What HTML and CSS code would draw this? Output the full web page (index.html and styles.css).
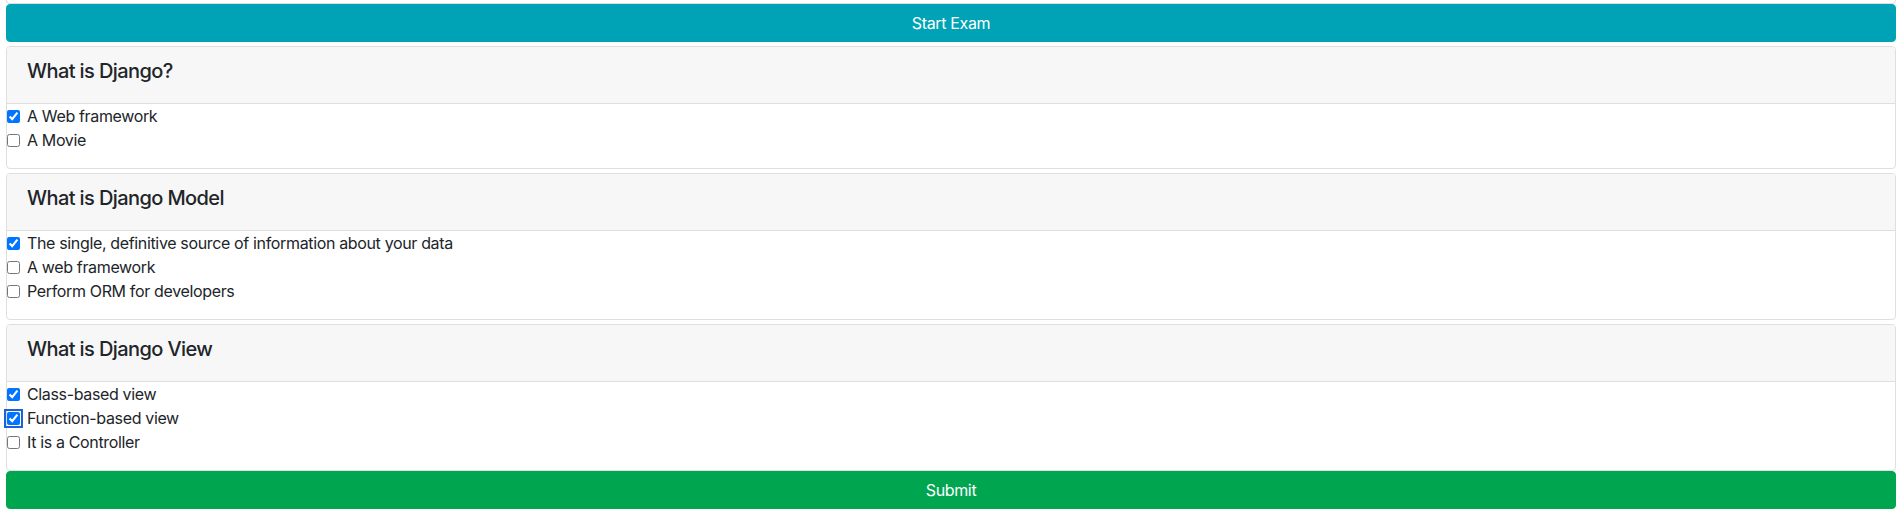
FILE: index.html
```html
<!DOCTYPE html>
<html>
<head>
<meta charset="utf-8">
<link rel="stylesheet" href="styles.css">
</head>
<body>
<div class="page">
  <div class="prev-card"></div>
  <button class="btn btn-info" type="button">Start Exam</button>

  <div class="card">
    <div class="card-header"><h5>What is Django?</h5></div>
    <div class="card-body">
      <label class="opt"><input type="checkbox" checked><span>A Web framework</span></label>
      <label class="opt"><input type="checkbox"><span>A Movie</span></label>
    </div>
  </div>

  <div class="card">
    <div class="card-header"><h5>What is Django Model</h5></div>
    <div class="card-body">
      <label class="opt"><input type="checkbox" checked><span>The single, definitive source of information about your data</span></label>
      <label class="opt"><input type="checkbox"><span>A web framework</span></label>
      <label class="opt"><input type="checkbox"><span>Perform ORM for developers</span></label>
    </div>
  </div>

  <div class="card">
    <div class="card-header"><h5>What is Django View</h5></div>
    <div class="card-body">
      <label class="opt"><input type="checkbox" checked><span>Class-based view</span></label>
      <label class="opt"><input type="checkbox" class="focused" checked><span>Function-based view</span></label>
      <label class="opt"><input type="checkbox"><span>It is a Controller</span></label>
    </div>
  </div>

  <button class="btn btn-success" type="submit">Submit</button>
</div>
</body>
</html>
```

FILE: styles.css
```css
html, body {
  margin: 0;
  padding: 0;
  background: #ffffff;
}

body {
  font-family: Inter, "Liberation Sans", Arial, sans-serif;
  font-size: 16px;
  line-height: 1.5;
  letter-spacing: -0.35px;
  color: #212529;
}

.page {
  display: flex;
  flex-direction: column;
  padding: 0 7px 0 6px;
}

.prev-card {
  height: 3px;
  border: 1px solid #dfdfdf;
  border-top: none;
  border-radius: 0 0 4px 4px;
}

.btn {
  display: block;
  width: 100%;
  height: 38px;
  border: 1px solid transparent;
  border-radius: 4px;
  font-family: inherit;
  font-size: 16px;
  line-height: 24px;
  letter-spacing: -0.35px;
  padding: 6px 12px;
  color: #ffffff;
  text-align: center;
  cursor: pointer;
}

.btn-info {
  background: #00a3b6;
  border-color: #00a3b6;
}

.btn-success {
  background: #00a64f;
  border-color: #00a64f;
}

.card {
  margin-top: 4px;
  border: 1px solid #dfdfdf;
  border-radius: 4px;
  background: #ffffff;
  display: flex;
  flex-direction: column;
}

.card-header {
  background: #f7f7f7;
  border-bottom: 1px solid #dfdfdf;
  padding: 12px 20px 12px 20px;
  border-radius: 3px 3px 0 0;
}

.card-header h5 {
  margin: 0 0 8px 0;
  font-size: 20px;
  line-height: 24px;
  font-weight: 500;
  letter-spacing: -0.6px;
  color: #212529;
}

.card-body {
  display: flex;
  flex-direction: column;
  padding: 0 0 16px 0;
}

.opt {
  display: flex;
  align-items: center;
  height: 24px;
}

.opt input {
  width: 13px;
  height: 13px;
  margin: 0 7px 0 0;
  flex: none;
}

.opt input.focused {
  outline: 2px solid #1a62d6;
  outline-offset: 1px;
  border-radius: 3px;
}
```
